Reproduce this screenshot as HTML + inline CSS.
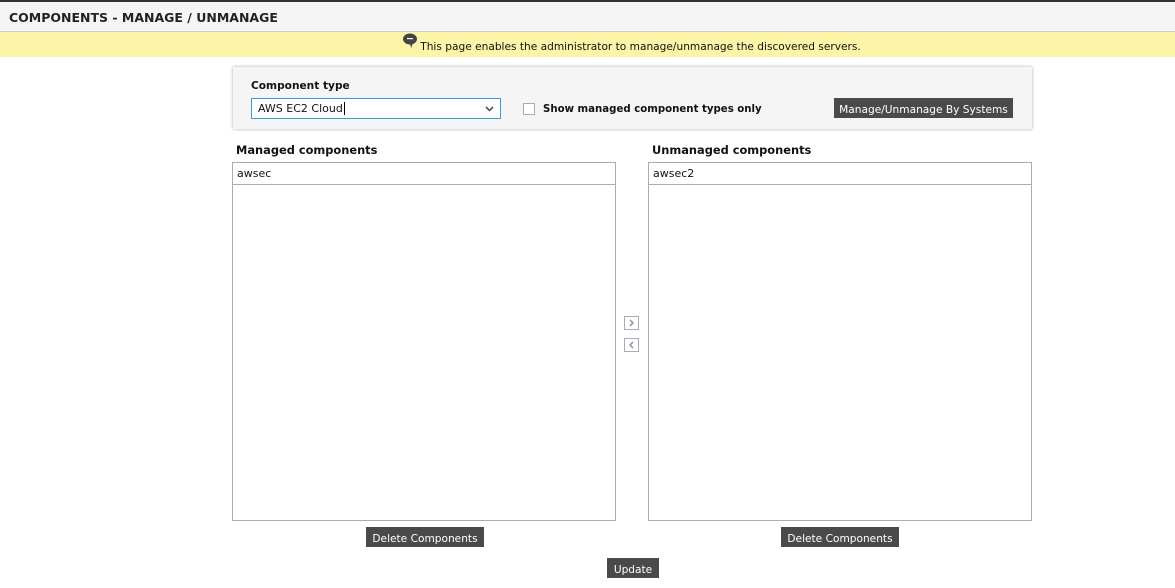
<!DOCTYPE html>
<html><head><style>
*{box-sizing:border-box;margin:0;padding:0}
body{width:1175px;height:588px;background:#fff;font-family:"DejaVu Sans","Liberation Sans",sans-serif;position:relative;overflow:hidden;color:#111}
.abs{position:absolute}
.btn{position:absolute;background:#4a4a4a;color:#fff;font-size:10.6px;line-height:24px;text-align:center;height:20px;overflow:hidden}
.list{position:absolute;border:1px solid #aab;background:#fff}
.item{height:22px;border-bottom:1px solid #aab;font-size:11px;line-height:21px;padding-left:4px}
.h{position:absolute;font-size:11.4px;font-weight:bold}
</style></head><body>
<div class="abs" style="left:0;top:0;width:1175px;height:2px;background:#333"></div>
<div class="abs" style="left:0;top:2px;width:1175px;height:30px;background:#f5f5f5;border-bottom:1px solid #ccc;font-size:12.5px;font-weight:bold;line-height:32px;padding-left:9px;color:#222">COMPONENTS - MANAGE / UNMANAGE</div>
<div class="abs" style="left:0;top:32px;width:1175px;height:25px;background:#fdf4a8;font-size:10.6px;line-height:30px;text-align:center;color:#111;padding-left:88px">
<svg width="16" height="15" viewBox="0 0 16 15" style="vertical-align:2px;margin-right:2px"><ellipse cx="8" cy="6" rx="7" ry="5.5" fill="#444"/><path d="M8 10 L9 15 L11 10Z" fill="#444"/><rect x="5" y="5" width="6" height="1.2" fill="#fff"/></svg>This page enables the administrator to manage/unmanage the discovered servers.</div>
<div class="abs" style="left:233px;top:67px;width:799px;height:62px;background:#f5f5f5;box-shadow:0 0 3px rgba(0,0,0,.35)"></div>
<div class="abs" style="left:251px;top:80px;font-size:10.6px;font-weight:bold">Component type</div>
<div class="abs" style="left:251px;top:98px;width:250px;height:21px;border:1px solid #3a9ad9;background:#fff;font-size:11px;line-height:20px;padding-left:6px">AWS EC2 Cloud<span style="border-left:1px solid #000;margin-left:1px"></span>
<svg class="abs" style="right:6px;top:7px" width="9" height="6" viewBox="0 0 9 6"><path d="M1 1 L4.5 4.5 L8 1" stroke="#555" stroke-width="1.6" fill="none"/></svg></div>
<div class="abs" style="left:523px;top:103px;width:12px;height:12px;border:1px solid #aaa;background:#fff"></div>
<div class="abs" style="left:543px;top:104px;font-size:10.2px;font-weight:bold">Show managed component types only</div>
<div class="btn" style="left:834px;top:98px;width:179px">Manage/Unmanage By Systems</div>
<div class="h" style="left:236px;top:143px">Managed components</div>
<div class="h" style="left:652px;top:143px">Unmanaged components</div>
<div class="list" style="left:232px;top:162px;width:384px;height:359px"><div class="item">awsec</div></div>
<div class="list" style="left:648px;top:162px;width:384px;height:359px"><div class="item">awsec2</div></div>
<div class="abs" style="left:624px;top:316px;width:15px;height:14px;border:1px solid #aab"><svg width="13" height="12" viewBox="0 0 13 12" style="display:block"><path d="M5 3 L8 6 L5 9" stroke="#99a" stroke-width="1.6" fill="none"/></svg></div>
<div class="abs" style="left:624px;top:338px;width:15px;height:14px;border:1px solid #aab"><svg width="13" height="12" viewBox="0 0 13 12" style="display:block"><path d="M8 3 L5 6 L8 9" stroke="#99a" stroke-width="1.6" fill="none"/></svg></div>
<div class="btn" style="left:366px;top:527px;width:118px">Delete Components</div>
<div class="btn" style="left:781px;top:527px;width:118px">Delete Components</div>
<div class="btn" style="left:607px;top:558px;width:52px">Update</div>
</body></html>
